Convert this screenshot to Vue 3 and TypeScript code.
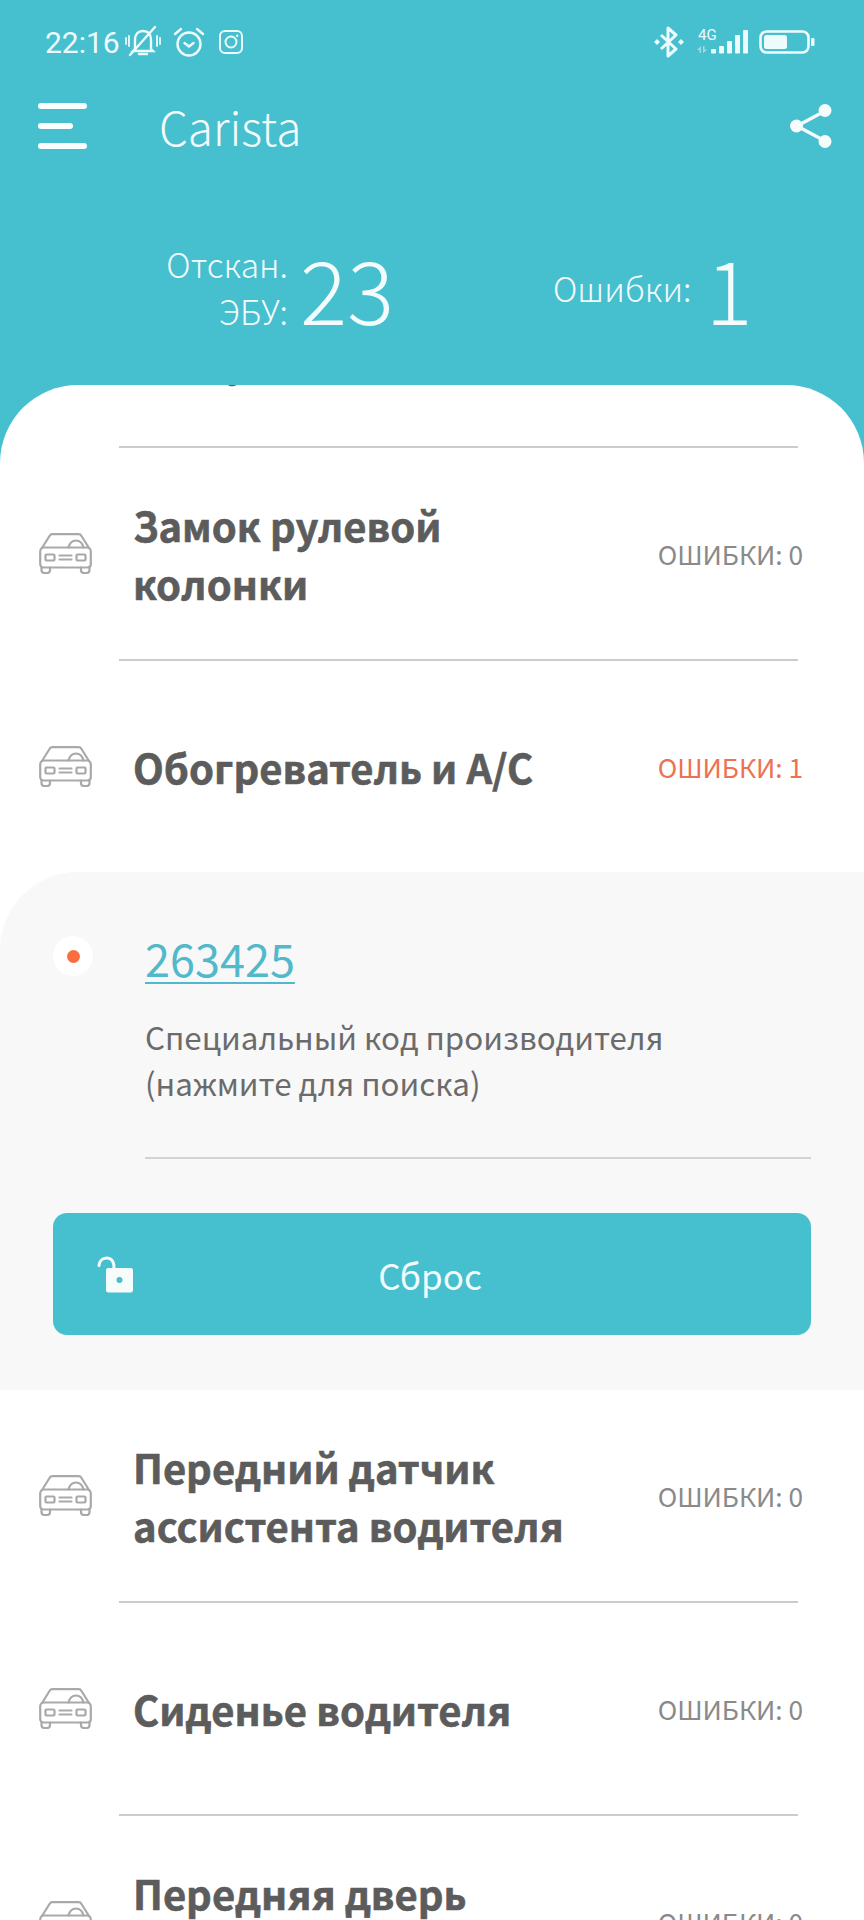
<script setup lang="ts">
interface EcuRow {
  title: string[];
  errors: number;
  open?: boolean;
}

const rows: EcuRow[] = [
  { title: ["Система", "доступа"], errors: 0 },
  { title: ["Замок рулевой", "колонки"], errors: 0 },
  { title: ["Обогреватель и A/C"], errors: 1, open: true },
  { title: ["Передний датчик", "ассистента водителя"], errors: 0 },
  { title: ["Сиденье водителя"], errors: 0 },
  { title: ["Передняя дверь", "водителя"], errors: 0 }
];
</script>

<template>
  <div class="screen">
    <header class="top">
      <div class="status">
        <span class="time">22:16</span>
        <svg class="st-mute" viewBox="0 0 36 32" fill="none" stroke="#eefbfd" stroke-width="2.4" stroke-linecap="round">
          <path d="M10 23V14C10 8 13 5 18 5S26 8 26 14V23L28 25H8Z" />
          <path d="M14 28H22" />
          <path d="M30 1L5 29" />
          <path d="M1 12V18M4 10V20M32 10V20M35 12V18" stroke-width="1.8" />
        </svg>
        <svg class="st-alarm" viewBox="0 0 32 30" fill="none" stroke="#eefbfd" stroke-width="2.4" stroke-linecap="round" stroke-linejoin="round">
          <circle cx="16" cy="17" r="11.5" />
          <path d="M11.5 16L16 19.5L20.5 16" />
          <path d="M2 7L8 2M30 7L24 2" />
        </svg>
        <svg class="st-insta" viewBox="0 0 24 24" fill="none" stroke="#eefbfd" stroke-width="2">
          <rect x="1" y="1" width="22" height="22" rx="5" />
          <circle cx="12" cy="12" r="5.5" />
          <circle cx="18.2" cy="5.8" r="1.2" fill="#eefbfd" stroke="none" />
        </svg>
        <span class="spacer"></span>
        <svg class="st-bt" viewBox="0 0 30 32" fill="none" stroke="#eefbfd" stroke-width="3" stroke-linejoin="round">
          <path d="M7 9L22 23L14 30V2L22 9L7 23" />
          <path d="M3 13L6 16L3 19L0 16Z" fill="#eefbfd" stroke="none" />
          <path d="M27 13L30 16L27 19L24 16Z" fill="#eefbfd" stroke="none" />
        </svg>
        <div class="st-net">
          <span class="st-4g">4G</span>
          <svg viewBox="0 0 55 30" fill="#eefbfd">
            <path d="M2 23L6 19V26H4.500V23ZM8 19H9.500V22.500H12.500L8 26Z" opacity="0.5" />
            <rect x="16" y="22" width="5" height="4.500" rx="1" />
            <rect x="24" y="19" width="5" height="7.500" rx="1" />
            <rect x="32" y="14" width="5" height="12.500" rx="1" />
            <rect x="40" y="8" width="5" height="18.500" rx="1" />
            <rect x="48" y="3" width="5" height="23.500" rx="1" />
          </svg>
        </div>
        <svg class="st-batt" viewBox="0 0 56 24" fill="none">
          <rect x="1.500" y="1.500" width="48" height="21" rx="6" stroke="#eefbfd" stroke-width="2.600" />
          <rect x="5" y="5" width="23" height="14" rx="2.500" fill="#eefbfd" />
          <rect x="52" y="8" width="3.500" height="8" rx="1.200" fill="#eefbfd" />
        </svg>
      </div>

      <div class="toolbar">
        <div class="menu">
          <span></span>
          <span class="short"></span>
          <span></span>
        </div>
        <span class="app-name">Carista</span>
        <svg class="share" viewBox="0 0 42 44" fill="#f6fbfc">
          <path d="M35 7L7 22L35 37" fill="none" stroke="#f6fbfc" stroke-width="3.400" />
          <circle cx="35" cy="6.500" r="6.500" />
          <circle cx="6.500" cy="22" r="6.500" />
          <circle cx="35" cy="37.500" r="6.500" />
        </svg>
      </div>

      <div class="stats">
        <div class="stat first">
          <span class="label">Отскан.<br />ЭБУ:</span>
          <span class="value">23</span>
        </div>
        <div class="stat">
          <span class="label single">Ошибки:</span>
          <span class="value one">1</span>
        </div>
      </div>
    </header>

    <main class="sheet">
      <div class="list">
        <template v-for="(row, i) in rows" :key="i">
          <div class="row">
            <svg class="car" viewBox="0 0 53 41" fill="none" stroke="#a9a9a9" stroke-width="2.200" stroke-linejoin="round" stroke-linecap="round">
              <path d="M3 15L10.500 3C11 2 12 1.200 13.500 1.200H39.500C41 1.200 42 2 42.500 3L50 15" />
              <path d="M1.200 18.500C1.200 16 3 14.500 5 14.500H48C50 14.500 51.800 16 51.800 18.500V31C51.800 33 50.500 34.500 48.500 34.500H4.500C2.500 34.500 1.200 33 1.200 31Z" />
              <path d="M2.500 34.500V37C2.500 39 3.600 40 5.500 40H8C10 40 11 39 11 37V34.500" />
              <path d="M42 34.500V37C42 39 43 40 45 40H47.500C49.400 40 50.500 39 50.500 37V34.500" />
              <rect x="6.500" y="21.500" width="9" height="6" rx="1" />
              <rect x="37.500" y="21.500" width="9" height="6" rx="1" />
              <path d="M20.500 22.500H32.500M20.500 26.500H32.500" />
              <path d="M29.500 14.500C30.500 10.500 33 7.500 37 7.500C41 7.500 43.500 10.500 44.500 14.500" />
            </svg>
            <div class="title">
              <div v-for="line in row.title" :key="line">{{ line }}</div>
            </div>
            <span class="errors" :class="{ bad: row.errors > 0 }">ОШИБКИ: {{ row.errors }}</span>
          </div>

          <section v-if="row.open" class="panel">
            <div class="finding">
              <div class="marker"><span></span></div>
              <div class="finding-body">
                <a class="code">263425</a>
                <p class="desc">Специальный код производителя<br />(нажмите для поиска)</p>
              </div>
            </div>
            <div class="reset">
              <svg class="lock" viewBox="0 0 36 37" fill="none">
                <path d="M2 9.500C2.500 5 5.500 2 9.500 2C13.500 2 16 4.500 16.800 8.500L17 13" stroke="#f6fbfc" stroke-width="3" stroke-linecap="round" />
                <path fill-rule="evenodd" d="M11 12H34C35 12 36 13 36 14V34C36 35.500 35 36.500 34 36.500H11C10 36.500 9 35.500 9 34V14C9 13 10 12 11 12ZM22.500 21A3 3 0 1 0 22.500 27A3 3 0 1 0 22.500 21Z" fill="#f6fbfc" />
              </svg>
              <span>Сброс</span>
            </div>
          </section>
          <div v-else-if="i < rows.length - 1" class="divider"></div>
        </template>
      </div>
    </main>
  </div>
</template>

<style scoped>
.screen {
  width: 864px;
  height: 1920px;
  overflow: hidden;
  display: flex;
  flex-direction: column;
  background: #46bfcf;
  font-family: "Noto Sans CJK SC", "Noto Sans", sans-serif;
}

.top {
  height: 385px;
  flex: none;
  color: #f4fbfc;
}

.status {
  height: 84px;
  padding: 0 49px 0 45px;
  box-sizing: border-box;
  display: flex;
  align-items: center;
}

.time {
  font-family: Roboto, sans-serif;
  font-size: 30px;
  color: #eefbfd;
  width: 80px;
}

.st-mute {
  width: 36px;
  height: 32px;
}

.st-alarm {
  width: 32px;
  height: 30px;
  margin-left: 12px;
}

.st-insta {
  width: 24px;
  height: 24px;
  margin-left: 14px;
}

.spacer {
  flex: 1;
}

.st-bt {
  width: 30px;
  height: 32px;
}

.st-net {
  width: 55px;
  height: 30px;
  margin-left: 11px;
  position: relative;
}

.st-net svg {
  position: absolute;
  left: 0;
  top: 0;
  width: 55px;
  height: 30px;
}

.st-4g {
  position: absolute;
  left: 3px;
  top: 0;
  font-family: Roboto, sans-serif;
  font-size: 15px;
  line-height: 16px;
  color: #eefbfd;
}

.st-batt {
  width: 56px;
  height: 24px;
  margin-left: 9px;
}

.toolbar {
  height: 88px;
  margin-top: -2px;
  padding: 0 32px 0 38px;
  display: flex;
  align-items: center;
}

.menu {
  width: 49px;
  display: flex;
  flex-direction: column;
  gap: 14px;
}

.menu span {
  height: 6px;
  border-radius: 3px;
  background: #fbfeff;
}

.menu .short {
  width: 35px;
}

.app-name {
  margin-left: 72px;
  flex: 1;
  font-size: 46px;
  font-weight: 300;
  line-height: 60px;
}

.share {
  width: 42px;
  height: 44px;
}

.stats {
  height: 110px;
  display: flex;
  margin-top: 62px;
  padding-left: 165px;
}

.stat {
  display: flex;
  align-items: center;
}

.stat.first {
  width: 388px;
}

.label {
  flex: none;
  font-size: 33.500px;
  font-weight: 300;
  line-height: 47px;
  text-align: right;
  width: 123px;
  white-space: nowrap;
}

.label.single {
  width: auto;
}

.value {
  font-size: 88px;
  font-weight: 300;
  line-height: 110px;
  margin-left: 12px;
}

.value.one {
  margin-left: 14px;
}

.sheet {
  flex: 1;
  background: #fff;
  border-radius: 78px 78px 0 0;
  overflow: hidden;
}

.list {
  margin-top: -150px;
}

.row {
  height: 211px;
  padding: 0 61px 0 39px;
  display: flex;
  align-items: center;
}

.row:first-child .title {
  margin-bottom: 21px;
}

.car {
  width: 53px;
  height: 41px;
  flex: none;
}

.title {
  flex: 1;
  margin-left: 41px;
  font-size: 40px;
  font-weight: 700;
  line-height: 58px;
  color: #5c5c5c;
  -webkit-text-stroke: 0.6px #5c5c5c;
}

.errors {
  font-size: 26.300px;
  font-weight: 400;
  color: #8a8a8a;
}

.errors.bad {
  color: #ee7252;
}

.divider {
  height: 2px;
  margin: 0 66px 0 119px;
  background: #cccccc;
}

.panel {
  height: 518px;
  box-sizing: border-box;
  padding: 53px 53px 0;
  background: #f8f8f8;
  border-top-left-radius: 78px;
}

.finding {
  display: flex;
  align-items: flex-start;
  gap: 52px;
}

.marker {
  width: 40px;
  height: 40px;
  margin-top: 11px;
  flex: none;
  border-radius: 50%;
  background: #fff;
  display: flex;
  align-items: center;
  justify-content: center;
}

.marker span {
  width: 13px;
  height: 13px;
  border-radius: 50%;
  background: #fb6c3e;
}

.finding-body {
  flex: 1;
  border-bottom: 2px solid #d2d2d2;
  padding-bottom: 51px;
}

.code {
  display: block;
  font-size: 45px;
  line-height: 66px;
  color: #52b9cb;
  text-decoration: underline;
  text-decoration-thickness: 2px;
  text-underline-offset: 5px;
}

.desc {
  margin: 23px 0 0;
  font-size: 31.300px;
  line-height: 46px;
  color: #6b6b6b;
}

.reset {
  margin-top: 54px;
  height: 122px;
  border-radius: 14px;
  background: #46bfcf;
  position: relative;
  display: flex;
  align-items: center;
  justify-content: center;
  padding-right: 4px;
  font-size: 35px;
  color: #f4fbfc;
}

.lock {
  position: absolute;
  left: 44px;
  top: 43px;
  width: 36px;
  height: 37px;
}
</style>

<style>
html,
body {
  margin: 0;
  background: #46bfcf;
}
</style>
